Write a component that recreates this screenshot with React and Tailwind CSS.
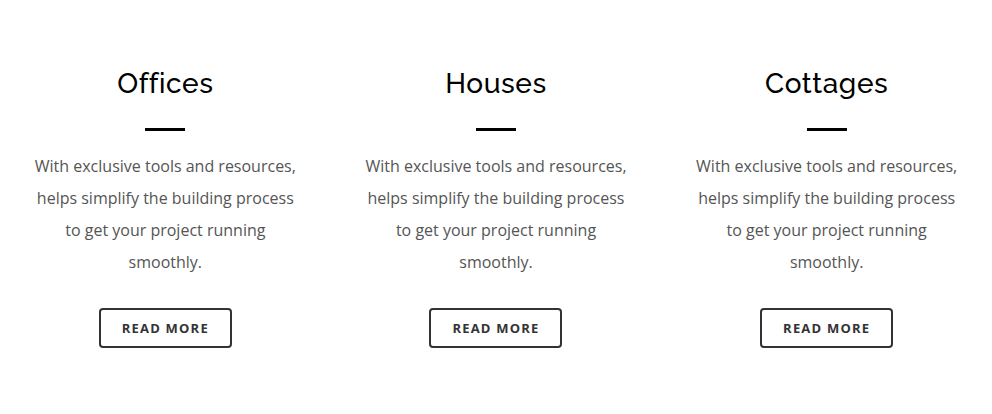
const items = ['Offices', 'Houses', 'Cottages'];

function Feature({ title }) {
  return (
    <div className="flex flex-col items-center text-center">
      <h3 className="text-[28px] leading-[36px] font-medium text-black font-['Raleway','Inter',sans-serif] tracking-[0.6px]">
        {title}
      </h3>
      <div className="w-10 h-[3px] bg-black mt-[26px]" />
      <p className="mt-[19px] w-[266px] text-[16px] leading-[32px] text-[#555] font-['Open_Sans',sans-serif]">
        With exclusive tools and resources, helps simplify the building process to get your project running smoothly.
      </p>
      <button className="mt-[30px] w-[133px] h-10 pt-px border-2 border-[#333] rounded-[4px] text-[13px] font-bold tracking-[1.2px] text-[#333] font-['Open_Sans',sans-serif]">
        READ MORE
      </button>
    </div>
  );
}

export default function App() {
  return (
    <div className="w-[992px] h-[414px] bg-white pt-[66px] grid grid-cols-3">
      {items.map((t) => (
        <Feature key={t} title={t} />
      ))}
    </div>
  );
}
